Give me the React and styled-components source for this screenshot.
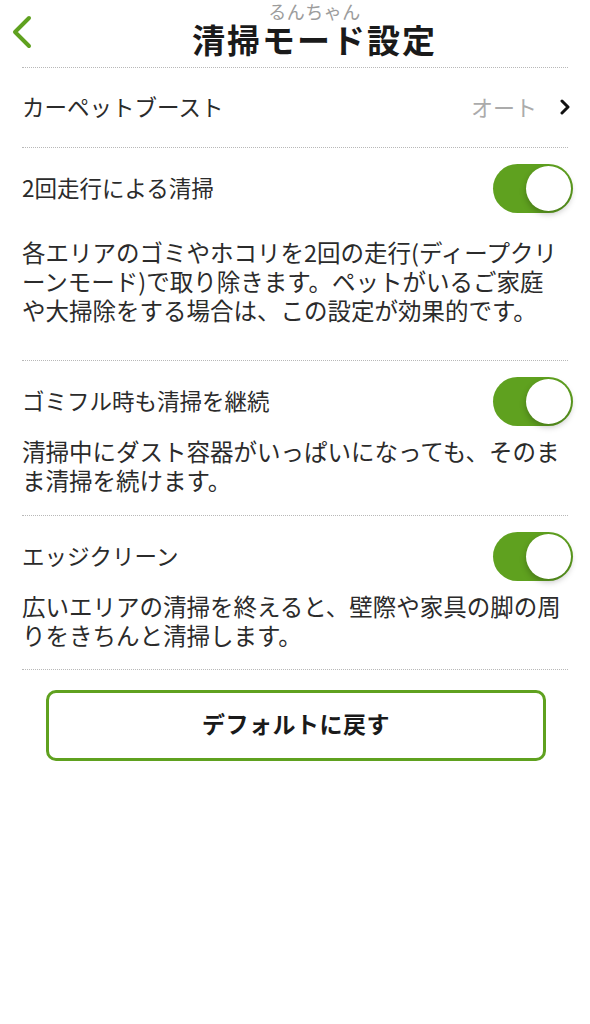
import styled, { createGlobalStyle } from "styled-components";

const GlobalStyle = createGlobalStyle`
  html, body {
    margin: 0;
    padding: 0;
    background: #ffffff;
  }
  body {
    font-family: "Noto Sans CJK JP", "Noto Sans", sans-serif;
    color: #2b2b2b;
  }
`;

const green = "#5fa11f";

const settings = [
  {
    label: "2回走行による清掃",
    text: "各エリアのゴミやホコリを2回の走行(ディープクリーンモード)で取り除きます。ペットがいるご家庭や大掃除をする場合は、この設定が効果的です。",
    gap: 25,
    bottom: 35,
  },
  {
    label: "ゴミフル時も清掃を継続",
    text: "清掃中にダスト容器がいっぱいになっても、そのまま清掃を続けます。",
    gap: 11,
    bottom: 20,
  },
  {
    label: "エッジクリーン",
    text: "広いエリアの清掃を終えると、壁際や家具の脚の周りをきちんと清掃します。",
    gap: 11,
    bottom: 19,
  },
];

export default function App() {
  return (
    <Page>
      <GlobalStyle />
      <Header>
        <Back aria-label="戻る">
          <svg width="22" height="34" viewBox="0 0 22 34">
            <polyline
              points="18,3 4,17 18,31"
              fill="none"
              stroke={green}
              strokeWidth="4"
              strokeLinecap="round"
              strokeLinejoin="round"
            />
          </svg>
        </Back>
        <TitleBlock>
          <Sub>るんちゃん</Sub>
          <Title>清掃モード設定</Title>
        </TitleBlock>
      </Header>
      <Body>
        <Divider />
        <LinkRow>
          <Label>カーペットブースト</Label>
          <Value>
            オート
            <svg width="12" height="16" viewBox="0 0 12 16">
              <polyline
                points="3,2 9,8 3,14"
                fill="none"
                stroke="#111"
                strokeWidth="3"
                strokeLinecap="round"
                strokeLinejoin="round"
              />
            </svg>
          </Value>
        </LinkRow>
        {settings.map((s) => (
          <div key={s.label}>
            <Divider />
            <Section $bottom={s.bottom}>
              <ToggleRow>
                <Label>{s.label}</Label>
                <Switch $on>
                  <Knob />
                </Switch>
              </ToggleRow>
              <Desc $gap={s.gap}>{s.text}</Desc>
            </Section>
          </div>
        ))}
        <Divider />
        <ButtonWrap>
          <ResetButton>デフォルトに戻す</ResetButton>
        </ButtonWrap>
      </Body>
    </Page>
  );
}

const Page = styled.div`
  width: 590px;
  min-height: 1024px;
  background: #fff;
`;

const Header = styled.header`
  height: 67px;
  display: flex;
  align-items: flex-start;
  padding-left: 11px;
  box-sizing: border-box;
`;

const Back = styled.button`
  border: 0;
  background: none;
  padding: 0;
  margin-top: 15px;
  width: 22px;
  height: 34px;
  display: flex;
`;

const TitleBlock = styled.div`
  flex: 1;
  display: flex;
  flex-direction: column;
  align-items: center;
  padding-left: 6px;
`;

const Sub = styled.div`
  font-size: 18px;
  line-height: 19px;
  color: #9c9c9c;
  margin-top: 2px;
  letter-spacing: 0.5px;
`;

const Title = styled.h1`
  margin: 0;
  font-size: 33px;
  line-height: 36px;
  font-weight: 700;
  color: #1a1a1a;
  letter-spacing: 2px;
`;

const Body = styled.main`
  padding: 0 22px;
`;

const Divider = styled.div`
  border-top: 1px dotted #b8b8b8;
`;

const LinkRow = styled.div`
  height: 79px;
  display: flex;
  align-items: center;
  justify-content: space-between;
`;

const Label = styled.span`
  font-size: 22.5px;
  line-height: 29px;
  color: #2b2b2b;
  margin-top: -3px;
`;

const Value = styled.span`
  display: flex;
  align-items: center;
  gap: 22px;
  font-size: 22px;
  color: #ababab;
  margin-top: -3px;
  svg {
    margin-right: -3px;
    margin-top: 2px;
  }
`;

const Section = styled.div`
  padding-top: 16px;
  padding-bottom: ${(p) => p.$bottom}px;
`;

const ToggleRow = styled.div`
  height: 49px;
  display: flex;
  align-items: center;
  justify-content: space-between;
`;

const Switch = styled.div`
  width: 80px;
  height: 49px;
  border-radius: 25px;
  background: ${(p) => (p.$on ? green : "#ddd")};
  position: relative;
  margin-right: -5px;
`;

const Knob = styled.div`
  position: absolute;
  top: 2px;
  right: 2px;
  width: 45px;
  height: 45px;
  border-radius: 50%;
  background: #fff;
  box-shadow: 0 3px 6px rgba(0, 0, 0, 0.25);
`;

const Desc = styled.p`
  margin: ${(p) => p.$gap}px 0 0;
  padding-right: 4px;
  font-size: 23.5px;
  line-height: 29px;
  color: #2b2b2b;
`;

const ButtonWrap = styled.div`
  padding: 20px 2px 0 24px;
`;

const ResetButton = styled.button`
  width: 500px;
  height: 71px;
  padding: 0 0 5px;
  border: 3px solid ${green};
  border-radius: 10px;
  background: #fff;
  font-family: "Noto Sans CJK JP", "Noto Sans", sans-serif;
  font-size: 23px;
  font-weight: 700;
  color: #1a1a1a;
  letter-spacing: 0.5px;
`;
